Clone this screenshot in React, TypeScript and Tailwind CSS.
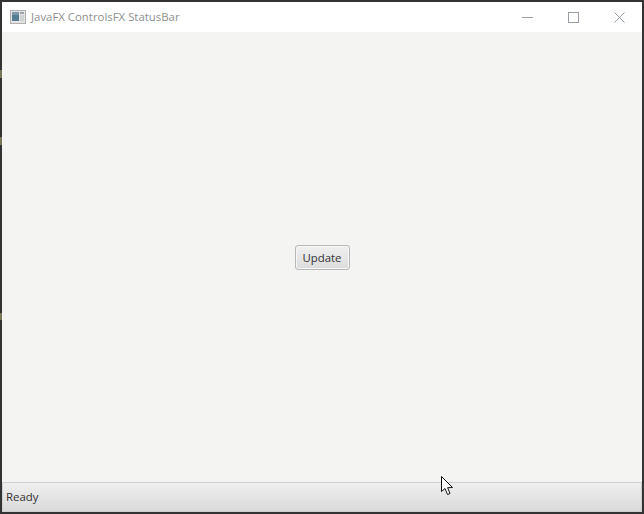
const WindowIcon = () => (
  <svg width="16" height="14" viewBox="0 0 16 14" className="shrink-0">
    <rect x="0.5" y="0.5" width="15" height="13" fill="#e4e4e4" stroke="#b0b0b0" />
    <rect x="2" y="2" width="7" height="9" fill="#557f90" />
    <rect x="2" y="2" width="7" height="3" fill="#7c98a6" />
    <rect x="10" y="2" width="4" height="2" fill="#9aa4a9" />
    <rect x="10" y="5" width="4" height="6" fill="#ced2d4" />
  </svg>
);

const Cursor = () => (
  <svg width="14" height="21" viewBox="0 0 14 21" className="absolute left-[441px] top-[476px]">
    <path
      d="M0.5 0.5 L0.5 15.5 L4 12.5 L6.5 18.5 L9 17.5 L6.6 11.7 L11.5 11.5 Z"
      fill="#ffffff"
      stroke="#111111"
      strokeWidth="1"
      strokeLinejoin="miter"
    />
  </svg>
);

const App = () => {
  return (
    <div className="relative flex h-[514px] w-[644px] flex-col overflow-hidden bg-[#333333] pt-[2px] pr-[2px] pb-[2px] pl-[2px] font-['Open_Sans','Noto_Sans',sans-serif]">
      {/* bits of the window behind, showing at the left edge */}
      <div className="absolute left-0 top-[70px] h-[8px] w-[2px] bg-[#77775a]" />
      <div className="absolute left-0 top-[137px] h-[8px] w-[2px] bg-[#77775a]" />
      <div className="absolute left-0 top-[313px] h-[7px] w-[2px] bg-[#77775a]" />

      {/* title bar */}
      <div className="flex h-[30px] shrink-0 items-center bg-white">
        <div className="ml-[8px] flex items-center gap-[5px]">
          <WindowIcon />
          <span className="text-[11.4px] text-[#8f8f8f]">JavaFX ControlsFX StatusBar</span>
        </div>
        <div className="ml-auto flex items-center">
          <button className="flex h-[30px] w-[46px] items-center justify-center">
            <svg width="11" height="11" viewBox="0 0 11 11">
              <path d="M0 5.5 H11" stroke="#9a9fa6" strokeWidth="1" />
            </svg>
          </button>
          <button className="flex h-[30px] w-[46px] items-center justify-center">
            <svg width="11" height="11" viewBox="0 0 11 11">
              <rect x="0.5" y="0.5" width="10" height="10" fill="none" stroke="#9a9fa6" strokeWidth="1" />
            </svg>
          </button>
          <button className="flex h-[30px] w-[46px] items-center justify-center">
            <svg width="11" height="11" viewBox="0 0 11 11">
              <path d="M0.5 0.5 L10.5 10.5 M10.5 0.5 L0.5 10.5" stroke="#9a9fa6" strokeWidth="1" />
            </svg>
          </button>
        </div>
      </div>

      {/* content */}
      <div className="flex flex-1 items-center justify-center bg-[#f4f4f2]">
        <button className="h-[25px] w-[55px] rounded-[3px] border border-[#b8b8b8] bg-gradient-to-b from-[#f0f0f0] to-[#dcdcdc] pt-px text-[11.4px] text-[#333333] shadow-[inset_0_0_0_1px_#f6f6f6]">
          Update
        </button>
      </div>

      {/* status bar */}
      <div className="flex h-[30px] shrink-0 items-center border border-[#cfcfcf] bg-gradient-to-b from-[#efefef] to-[#dadada] pl-[3px] text-[11.4px] text-[#333333]">
        Ready
      </div>

      <Cursor />
    </div>
  );
};

export default App;
